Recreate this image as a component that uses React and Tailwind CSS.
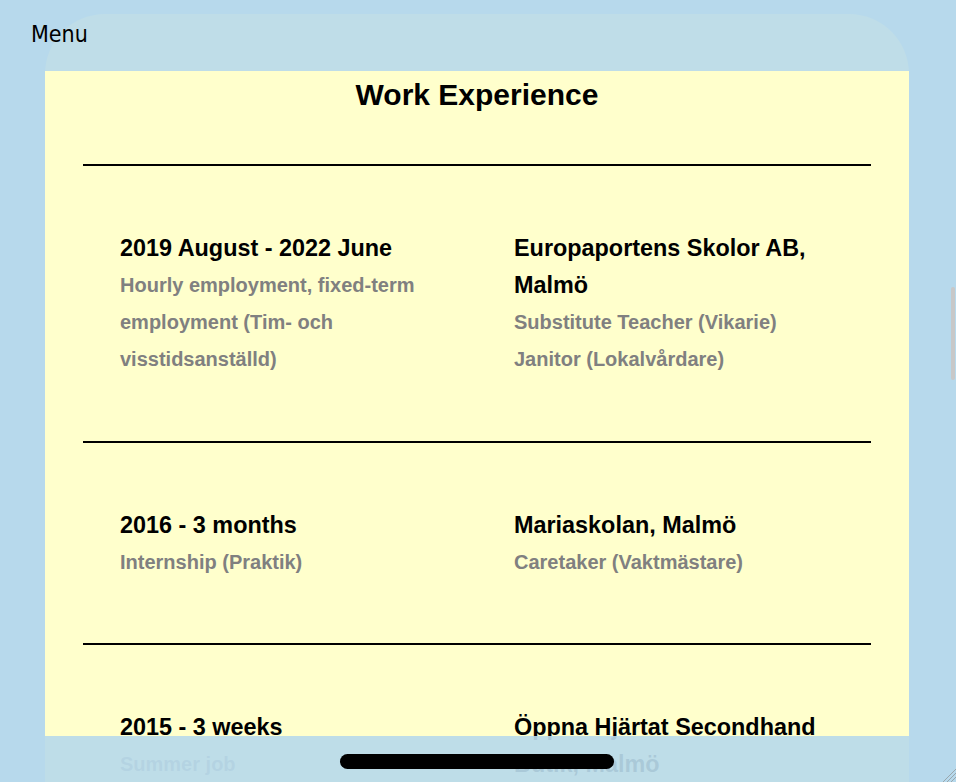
const jobs = [
  {
    when: "2019 August - 2022 June",
    type: ["Hourly employment, fixed-term employment (Tim- och visstidsanställd)"],
    where: "Europaportens Skolor AB, Malmö",
    roles: ["Substitute Teacher (Vikarie)", "Janitor (Lokalvårdare)"],
  },
  {
    when: "2016 - 3 months",
    type: ["Internship (Praktik)"],
    where: "Mariaskolan, Malmö",
    roles: ["Caretaker (Vaktmästare)"],
  },
  {
    when: "2015 - 3 weeks",
    type: ["Summer job"],
    where: "Öppna Hjärtat Secondhand Butik, Malmö",
    roles: ["Shop Assistant"],
  },
];

function JobRow({ job }) {
  return (
    <div className="border-t-2 border-black">
      <div className="grid grid-cols-2 pt-[64px] pb-[62.5px]">
        <div className="px-[37px]">
          <h3 className="text-[23.4px] font-bold leading-[37px] text-black">{job.when}</h3>
          {job.type.map((t) => (
            <p key={t} className="text-[20px] font-bold leading-[37px] text-[#808080]">{t}</p>
          ))}
        </div>
        <div className="px-[37px]">
          <h3 className="text-[23.4px] font-bold leading-[37px] text-black">{job.where}</h3>
          {job.roles.map((r) => (
            <p key={r} className="text-[20px] font-bold leading-[37px] text-[#808080]">{r}</p>
          ))}
        </div>
      </div>
    </div>
  );
}

export default function App() {
  return (
    <div className="relative h-[782px] overflow-hidden bg-[#b7d9ec] font-['Liberation_Sans',Arial,sans-serif]">
      <button className="absolute left-[31px] top-[23px] z-10 font-['DejaVu_Sans_Condensed','DejaVu_Sans',sans-serif] text-[23px] leading-none text-black">
        Menu
      </button>

      <div className="ml-[45px] mr-[47px] mt-[14px] h-full rounded-t-[60px] bg-[#bfdde8] pt-[57px]">
        <div className="bg-[#ffffcc] pt-[6px] pb-10">
          <h2 className="text-center text-[30px] font-bold leading-[35px] text-black">Work Experience</h2>
          <div className="mx-[38px] mt-[52px]">
            {jobs.map((job) => (
              <JobRow key={job.when} job={job} />
            ))}
          </div>
        </div>
      </div>

      {/* bottom bar with home indicator */}
      <div className="absolute bottom-0 left-[45px] flex h-[46px] w-[864px] items-start bg-[#b9daea]/[0.92] pt-[18px]">
        <div className="ml-[295px] h-[15px] w-[274px] rounded-full bg-black" />
      </div>

      {/* scrollbar */}
      <div className="absolute left-[951px] top-[287px] h-[93px] w-[4px] rounded-full bg-[#c8c8c8]" />

      {/* resize grip */}
      <svg className="absolute bottom-0 right-0" width="16" height="16" viewBox="0 0 16 16">
        <line x1="16" y1="3" x2="3" y2="16" stroke="#9aa7ad" strokeWidth="1" />
        <line x1="16" y1="7" x2="7" y2="16" stroke="#9aa7ad" strokeWidth="1" />
        <line x1="16" y1="11" x2="11" y2="16" stroke="#9aa7ad" strokeWidth="1" />
      </svg>
    </div>
  );
}
